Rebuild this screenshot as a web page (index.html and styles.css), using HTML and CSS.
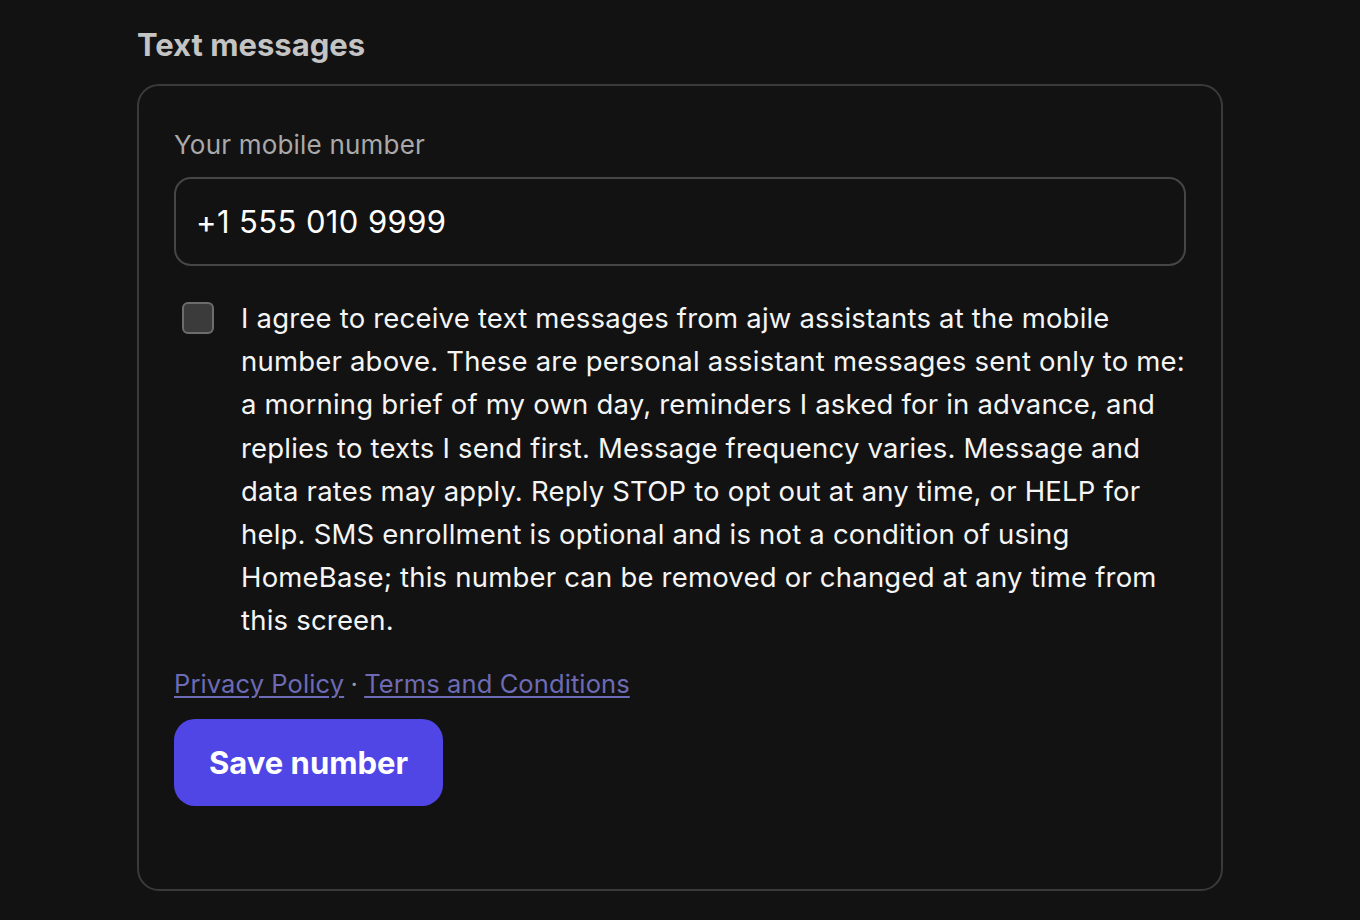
FILE: index.html
```html
<!DOCTYPE html>
<html lang="en">
<head>
<meta charset="utf-8">
<title>Text messages</title>
<link rel="stylesheet" href="styles.css">
</head>
<body>
<main class="page">
  <section class="section">
    <h2 class="section-title">Text messages</h2>
    <div class="card">
      <label class="field-label" for="phone">Your mobile number</label>
      <input class="field-input" id="phone" type="tel" value="+1 555 010 9999">
      <label class="consent">
        <span class="checkbox"></span>
        <span class="consent-text">I agree to receive text messages from ajw assistants at the mobile number above. These are personal assistant messages sent only to me: a morning brief of my own day, reminders I asked for in advance, and replies to texts I send first. Message frequency varies. Message and data rates may apply. Reply STOP to opt out at any time, or HELP for help. SMS enrollment is optional and is not a condition of using HomeBase; this number can be removed or changed at any time from this screen.</span>
      </label>
      <p class="links"><a href="#">Privacy Policy</a> <span class="dot">·</span> <a href="#">Terms and Conditions</a></p>
      <button class="btn-primary" type="button">Save number</button>
    </div>
  </section>
</main>
</body>
</html>
```
FILE: styles.css
```css
* { box-sizing: border-box; }
html, body {
  margin: 0;
  padding: 0;
  background: #121212;
  color: #f2f2f2;
  font-family: Inter, "Noto Sans", "Liberation Sans", sans-serif;
}
.page {
  width: 1086px;
  margin: 0 auto;
  padding-top: 26px;
}
.section-title {
  margin: 0 0 21px;
  font-size: 31px;
  line-height: 37px;
  font-weight: 700;
  color: #c4c4c4;
}
.card {
  border: 2px solid #3a3a3a;
  border-radius: 22px;
  padding: 42px 35px 83px 35px;
  display: flex;
  flex-direction: column;
  align-items: flex-start;
}
.field-label {
  font-size: 26px;
  line-height: 34px;
  letter-spacing: 0.2px;
  color: #a9a9a9;
  margin-bottom: 15px;
}
.field-input {
  width: 100%;
  height: 89px;
  background: transparent;
  border: 2px solid #464646;
  border-radius: 17px;
  padding: 0 20px;
  font-family: inherit;
  font-size: 31px;
  letter-spacing: 0.4px;
  color: #ffffff;
  outline: none;
}
.consent {
  display: flex;
  gap: 27px;
  margin-top: 31px;
  padding-left: 8px;
  width: 100%;
}
.checkbox {
  flex: 0 0 auto;
  width: 32px;
  height: 32px;
  margin-top: 5px;
  border: 2px solid #6c6c6c;
  border-radius: 6px;
  background: #3b3b3b;
}
.consent-text {
  font-size: 27.5px;
  line-height: 43.2px;
  letter-spacing: 0.2px;
  color: #f5f5f5;
}
.links {
  margin: 24px 0 0;
  font-size: 25.5px;
  line-height: 34px;
  letter-spacing: 0.1px;
  color: #9a9a9a;
}
.links a {
  color: #6d6bb5;
  text-decoration: underline;
  text-underline-offset: 3px;
}
.dot { margin: 0 -1px; }
.btn-primary {
  margin-top: 18px;
  height: 87px;
  padding: 0 35px;
  border: none;
  border-radius: 21px;
  background: #4f46e5;
  color: #ffffff;
  font-family: inherit;
  font-size: 31px;
  font-weight: 700;
}
```
